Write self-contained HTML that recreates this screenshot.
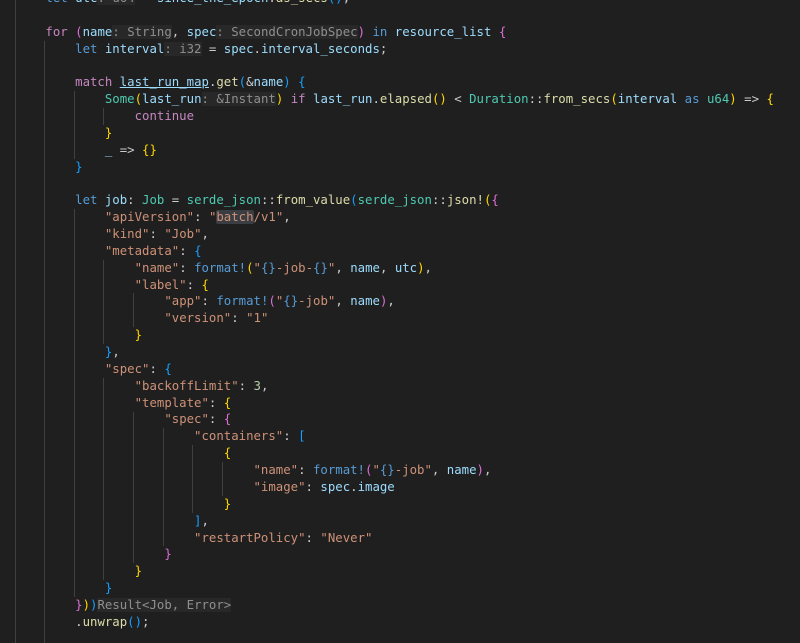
<!DOCTYPE html>
<html><head><meta charset="utf-8"><style>
html,body{margin:0;padding:0;background:#1f1f1f;width:800px;height:643px;overflow:hidden;position:relative}
#c{position:absolute;left:15.7px;top:-10px;font-family:"DejaVu Sans Mono","Liberation Mono",monospace;font-size:12.35px;line-height:16.86px;color:#cccccc;white-space:pre;margin:0}
.g{position:absolute;width:1px;background:#404040}
.k{color:#569cd6}.p{color:#c586c0}.v{color:#9cdcfe}.t{color:#4ec9b0}.f{color:#dcdcaa}.s{color:#ce9178}.n{color:#b5cea8}
.h{color:#8f8f8f;background:#282828}
.b1{color:#ffd700}.b2{color:#da70d6}.b3{color:#179fff}
.u{text-decoration:underline;text-decoration-color:#9cdcfe}
.w{background:#3a3d41;border-radius:2px}
</style></head><body>
<div id="guides"></div>
<pre id="c"><span class="k">    let</span> <span class="v">utc</span><span class="h">: u64</span> = <span class="v">since_the_epoch</span>.<span class="f">as_secs</span><span class="b3">()</span>;

    <span class="p">for</span> <span class="b2">(</span><span class="v">name</span><span class="h">: String</span>, <span class="v">spec</span><span class="h">: SecondCronJobSpec</span><span class="b2">)</span> <span class="k">in</span> <span class="v">resource_list</span> <span class="b2">{</span>
        <span class="k">let</span> <span class="v">interval</span><span class="h">: i32</span> = <span class="v">spec</span>.<span class="v">interval_seconds</span>;

        <span class="p">match</span> <span class="v u">last_run_map</span>.<span class="f">get</span><span class="b3">(</span>&amp;<span class="v">name</span><span class="b3">)</span> <span class="b3">{</span>
            <span class="t">Some</span><span class="b1">(</span><span class="v">last_run</span><span class="h">: &amp;Instant</span><span class="b1">)</span> <span class="p">if</span> <span class="v">last_run</span>.<span class="f">elapsed</span><span class="b1">()</span> &lt; <span class="t">Duration</span>::<span class="f">from_secs</span><span class="b1">(</span><span class="v">interval</span> <span class="k">as</span> <span class="t">u64</span><span class="b1">)</span> =&gt; <span class="b1">{</span>
                <span class="p">continue</span>
            <span class="b1">}</span>
            <span class="v">_</span> =&gt; <span class="b1">{}</span>
        <span class="b3">}</span>

        <span class="k">let</span> <span class="v">job</span>: <span class="t">Job</span> = <span class="t">serde_json</span>::<span class="f">from_value</span><span class="b3">(</span><span class="t">serde_json</span>::<span class="f">json!</span><span class="b1">(</span><span class="b2">{</span>
            <span class="s">"apiVersion"</span>: <span class="s">"<span class="w">batch</span>/v1"</span>,
            <span class="s">"kind"</span>: <span class="s">"Job"</span>,
            <span class="s">"metadata"</span>: <span class="b3">{</span>
                <span class="s">"name"</span>: <span class="k">format!</span><span class="b1">(</span><span class="s">"<span class="k">{}</span>-job-<span class="k">{}</span>"</span>, <span class="v">name</span>, <span class="v">utc</span><span class="b1">)</span>,
                <span class="s">"label"</span>: <span class="b1">{</span>
                    <span class="s">"app"</span>: <span class="k">format!</span><span class="b2">(</span><span class="s">"<span class="k">{}</span>-job"</span>, <span class="v">name</span><span class="b2">)</span>,
                    <span class="s">"version"</span>: <span class="s">"1"</span>
                <span class="b1">}</span>
            <span class="b3">}</span>,
            <span class="s">"spec"</span>: <span class="b3">{</span>
                <span class="s">"backoffLimit"</span>: <span class="n">3</span>,
                <span class="s">"template"</span>: <span class="b1">{</span>
                    <span class="s">"spec"</span>: <span class="b2">{</span>
                        <span class="s">"containers"</span>: <span class="b3">[</span>
                            <span class="b1">{</span>
                                <span class="s">"name"</span>: <span class="k">format!</span><span class="b2">(</span><span class="s">"<span class="k">{}</span>-job"</span>, <span class="v">name</span><span class="b2">)</span>,
                                <span class="s">"image"</span>: <span class="v">spec</span>.<span class="v">image</span>
                            <span class="b1">}</span>
                        <span class="b3">]</span>,
                        <span class="s">"restartPolicy"</span>: <span class="s">"Never"</span>
                    <span class="b2">}</span>
                <span class="b1">}</span>
            <span class="b3">}</span>
        <span class="b2">}</span><span class="b1">)</span><span class="b3">)</span><span class="h">Result&lt;Job, Error&gt;</span>
        .<span class="f">unwrap</span><span class="b3">()</span>;
</pre>
<script>
var G=[[0,0,38],[4,3,38],[8,6,9],[8,13,35],[12,7,7],[12,16,20],[12,23,34],[16,18,19],[16,25,33],[20,26,32],[24,27,30],[28,28,29]];
var h='';G.forEach(function(g){var x=Math.round(14.5+g[0]*7.4),t=-10+g[1]*16.86,b=Math.min(643,-10+(g[2]+1)*16.86);h+='<div class="g" style="left:'+x+'px;top:'+t+'px;height:'+(b-t)+'px"></div>';});
document.getElementById('guides').innerHTML=h;
</script>
</body></html>
